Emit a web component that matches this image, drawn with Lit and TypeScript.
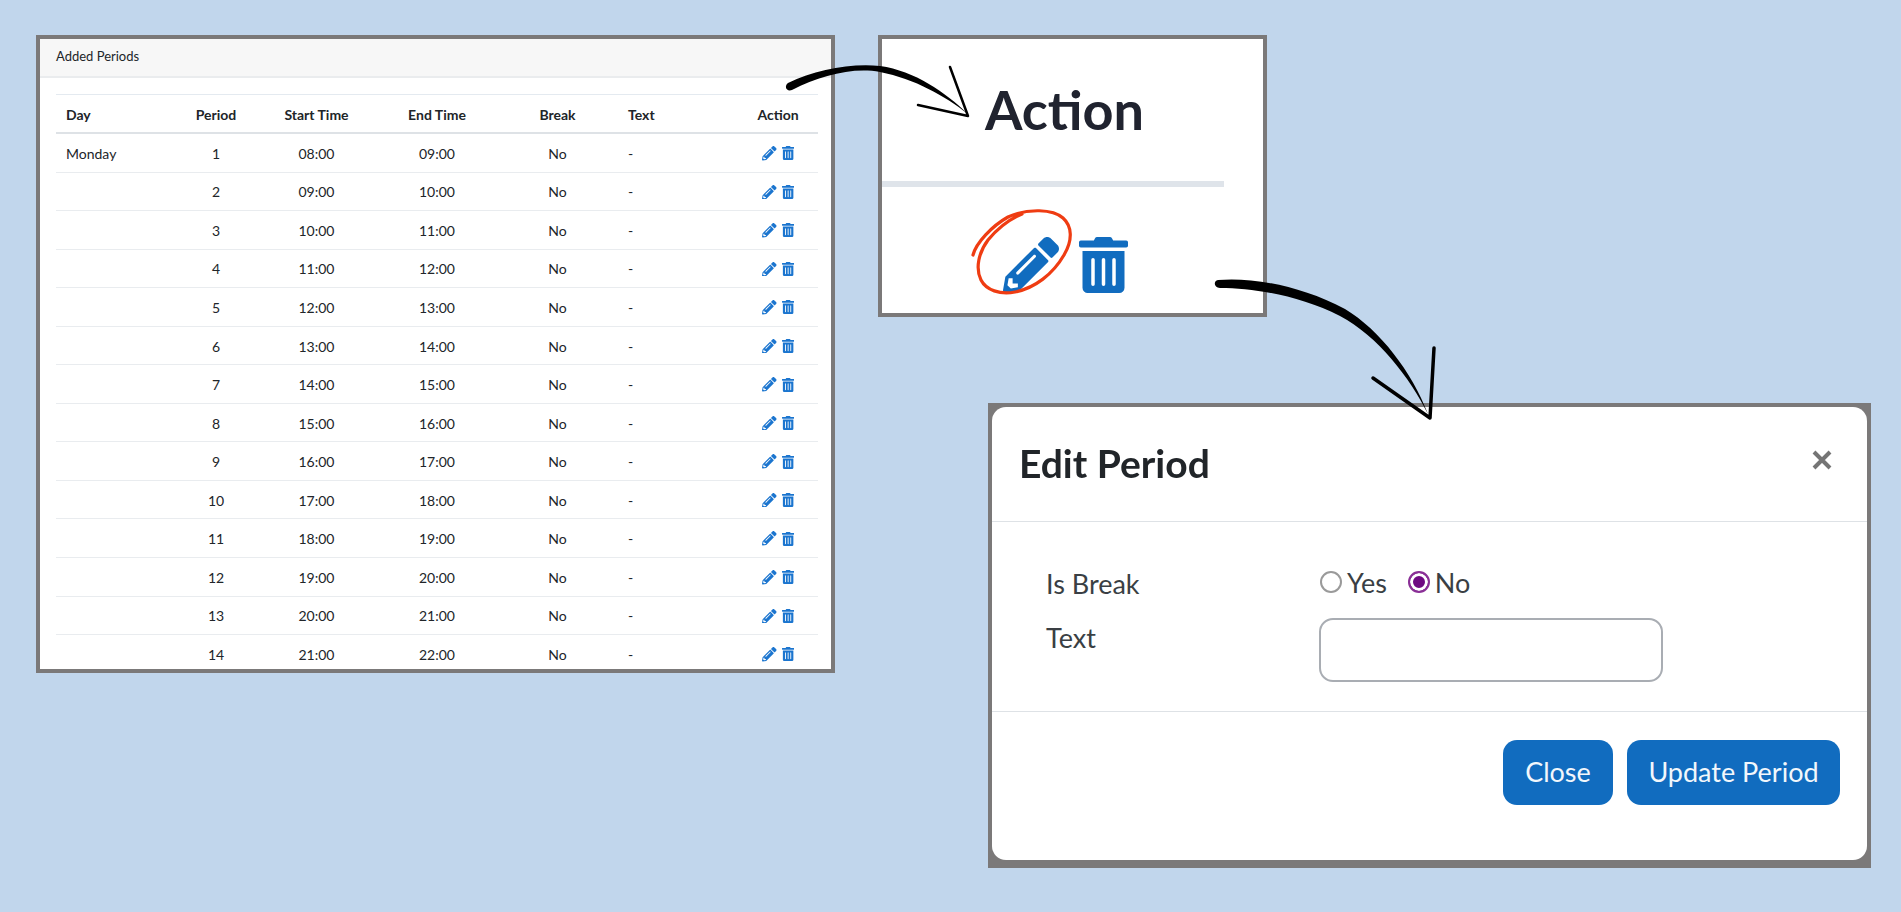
import { LitElement, html, css, svg } from "lit";
import { customElement } from "lit/decorators.js";

const pencil = svg`<path d="M497.9 142.1l-46.1 46.1c-4.7 4.7-12.3 4.7-17 0l-111-111c-4.7-4.7-4.7-12.3 0-17l46.1-46.1c18.7-18.7 49.1-18.7 67.9 0l60.1 60.1c18.8 18.7 18.8 49.1 0 67.9zM284.2 99.8L21.6 362.4.4 483.9c-2.9 16.4 11.4 30.6 27.8 27.8l121.5-21.3 262.6-262.6c4.3-4.3 4.3-11.3 0-15.6l-111-111c-4.4-4.3-11.4-4.3-15.7 0zM124.1 339.9c-5.5-5.5-5.5-14.3 0-19.8l154-154c5.5-5.5 14.3-5.5 19.8 0s5.5 14.3 0 19.8l-154 154c-5.5 5.5-14.3 5.5-19.8 0zM88 424h48v36.3l-64.5 11.3-31.1-31.1L51.7 376H88v48z"/>`;
const trash = svg`<path d="M32 464a48 48 0 0 0 48 48h288a48 48 0 0 0 48-48V128H32zm272-256a16 16 0 0 1 32 0v224a16 16 0 0 1-32 0zm-96 0a16 16 0 0 1 32 0v224a16 16 0 0 1-32 0zm-96 0a16 16 0 0 1 32 0v224a16 16 0 0 1-32 0zM432 32H312l-9.4-18.7A24 24 0 0 0 281.1 0H166.8a23.72 23.72 0 0 0-21.4 13.3L136 32H16A16 16 0 0 0 0 48v32a16 16 0 0 0 16 16h416a16 16 0 0 0 16-16V48a16 16 0 0 0-16-16z"/>`;

const rows = [
  ["Monday", "1", "08:00", "09:00"],
  ["", "2", "09:00", "10:00"],
  ["", "3", "10:00", "11:00"],
  ["", "4", "11:00", "12:00"],
  ["", "5", "12:00", "13:00"],
  ["", "6", "13:00", "14:00"],
  ["", "7", "14:00", "15:00"],
  ["", "8", "15:00", "16:00"],
  ["", "9", "16:00", "17:00"],
  ["", "10", "17:00", "18:00"],
  ["", "11", "18:00", "19:00"],
  ["", "12", "19:00", "20:00"],
  ["", "13", "20:00", "21:00"],
  ["", "14", "21:00", "22:00"],
];

@customElement("app-root")
export class AppRoot extends LitElement {
  static styles = css`
    :host {
      display: block;
      position: relative;
      height: 912px;
      overflow: hidden;
      background: #c1d6ec;
      font-family: Lato, "Open Sans", sans-serif;
      color: #212529;
    }
    .page {
      display: flex;
      gap: 43px;
      align-items: flex-start;
      padding: 35px 0 0 36px;
    }
    .frame {
      box-sizing: border-box;
      border: 4px solid #7b7979;
      background: #fff;
    }
    .periods {
      width: 799px;
      height: 638px;
      overflow: hidden;
      flex: none;
    }
    .periods-head {
      box-sizing: border-box;
      height: 39px;
      padding-left: 16px;
      line-height: 35px;
      font-size: 13px;
      background: #f7f7f7;
      border-bottom: 2px solid #eaecee;
    }
    .table-wrap {
      padding: 16px 13px 0 16px;
    }
    .row {
      display: grid;
      grid-template-columns: 100px 120px 81px 160px 81px 115px 1fr;
      height: 38.56px;
      box-sizing: border-box;
      align-items: center;
      font-size: 14px;
      border-bottom: 1.5px solid #e9ecef;
      padding-top: 1px;
    }
    .row.head {
      font-weight: 700;
      border-top: 1.5px solid #e4eaf0;
      border-bottom: 2px solid #dee2e6;
      height: 40px;
    }
    .row > span {
      text-align: center;
    }
    .row > .day {
      text-align: left;
      padding-left: 10px;
    }
    .row > .text {
      text-align: left;
      padding-left: 30px;
    }
    .row > .act {
      display: flex;
      justify-content: center;
      gap: 5px;
      padding-left: 25px;
      align-items: center;
    }
    .row .i-pen {
      width: 14.5px;
      height: 14.5px;
      fill: #1b75cf;
    }
    .row .i-bin {
      width: 12.25px;
      height: 14px;
      fill: #1b75cf;
    }
    .right {
      flex: none;
    }
    .zoomed {
      width: 389px;
      height: 282px;
      overflow: hidden;
    }
    .zoomed-title {
      height: 148px;
      width: 342px;
      box-sizing: border-box;
      padding: 37px 0 0 103px;
      font-size: 54px;
      font-weight: 700;
      line-height: 68px;
      color: #20232f;
      border-bottom: 6px solid #dfe4ea;
    }
    .zoomed-title span,
    .zoomed-icons {
      filter: blur(0.7px);
    }
    .zoomed-title span {
      display: inline-block;
    }
    .zoomed-icons {
      display: flex;
      padding: 50px 0 0 121px;
      gap: 20px;
      fill: #116cbf;
    }
    .zoomed-icons .i-pen {
      width: 56px;
      height: 56px;
    }
    .zoomed-icons .i-bin {
      width: 49px;
      height: 56px;
    }
    .dialog {
      width: 883px;
      height: 465px;
      box-sizing: border-box;
      margin: 86px 0 0 110px;
      background: #7b7979;
      padding: 4px 4px 8px;
    }
    .dialog-card {
      height: 100%;
      background: #fff;
      border-radius: 14px;
      display: flex;
      flex-direction: column;
    }
    .dialog-head {
      height: 115px;
      flex: none;
      box-sizing: border-box;
      border-bottom: 1.5px solid #dee2e6;
      display: flex;
      justify-content: space-between;
      padding: 19px 35px 0 27px;
    }
    .dialog-head h2 {
      margin: 0;
      font-size: 39px;
      font-weight: 700;
      line-height: 74px;
      color: #212529;
      filter: blur(0.5px);
    }
    .dialog-close {
      width: 20px;
      height: 20px;
      margin-top: 24px;
      stroke: #757575;
      stroke-width: 4;
      fill: none;
    }
    .dialog-body {
      flex: none;
      height: 190px;
      box-sizing: border-box;
      padding: 42px 0 0 54px;
      border-bottom: 1.5px solid #dee2e6;
      display: grid;
      grid-template-columns: 273px 344px;
      grid-template-rows: 40px 64px;
      row-gap: 14px;
      font-size: 27px;
      color: #3a3f44;
    }
    .field-label {
      line-height: 40px;
    }
    .radios {
      display: flex;
      align-items: center;
      height: 36px;
    }
    .radio {
      width: 22px;
      height: 22px;
      box-sizing: border-box;
      border-radius: 50%;
      border: 2px solid #9a9a9a;
      margin: 0 5px 0 1px;
    }
    .radio.on {
      border-color: #8a2f96;
      background: #6f0a82;
      box-shadow: inset 0 0 0 3px #fff;
      margin-left: 21px;
      margin-right: 5px;
    }
    .field-input {
      box-sizing: border-box;
      width: 344px;
      height: 64px;
      border: 2px solid #a9adb3;
      border-radius: 14px;
      background: #fff;
      padding: 0;
    }
    .dialog-foot {
      display: flex;
      justify-content: flex-end;
      gap: 14px;
      padding: 28px 27px 0 0;
    }
    .btn {
      height: 65px;
      box-sizing: border-box;
      border: none;
      border-radius: 14px;
      background: #116cbf;
      color: #f2f7fc;
      font: 400 27px Lato, sans-serif;
      padding: 0 0 2px;
    }
    .btn-close {
      width: 110px;
    }
    .btn-update {
      width: 213px;
    }
    .arrows {
      position: absolute;
      inset: 0;
      width: 1901px;
      height: 912px;
      pointer-events: none;
    }
  `;

  render() {
    return html`
      <div class="page">
        <section class="frame periods">
          <div class="periods-head">Added Periods</div>
          <div class="table-wrap">
            <div class="row head">
              <span class="day">Day</span><span>Period</span><span>Start Time</span><span>End Time</span
              ><span>Break</span><span class="text">Text</span><span class="act">Action</span>
            </div>
            ${rows.map(
              (r) => html`<div class="row">
                <span class="day">${r[0]}</span><span>${r[1]}</span><span>${r[2]}</span><span>${r[3]}</span
                ><span>No</span><span class="text">-</span>
                <span class="act">
                  <svg class="i-pen" viewBox="0 0 512 512">${pencil}</svg>
                  <svg class="i-bin" viewBox="0 0 448 512">${trash}</svg>
                </span>
              </div>`
            )}
          </div>
        </section>
        <div class="right">
          <section class="frame zoomed">
            <div class="zoomed-title"><span>Action</span></div>
            <div class="zoomed-icons">
              <svg class="i-pen" viewBox="0 0 512 512">${pencil}</svg>
              <svg class="i-bin" viewBox="0 0 448 512">${trash}</svg>
            </div>
          </section>
          <section class="dialog">
            <div class="dialog-card">
              <div class="dialog-head">
                <h2>Edit Period</h2>
                <svg class="dialog-close" viewBox="0 0 20 20"><path d="M2 2 18 18M18 2 2 18" /></svg>
              </div>
              <div class="dialog-body">
                <div class="field-label">Is Break</div>
                <div class="radios">
                  <span class="radio"></span>Yes <span class="radio on"></span>No
                </div>
                <div class="field-label">Text</div>
                <input class="field-input" />
              </div>
              <div class="dialog-foot">
                <button class="btn btn-close">Close</button>
                <button class="btn btn-update">Update Period</button>
              </div>
            </div>
          </section>
        </div>
      </div>
      <svg class="arrows" viewBox="0 0 1901 912">
        <path d="M788 83C815 70 850 63 880 66C915 71 945 92 968 114C945 96 915 79 880 72C852 67 820 76 792 90C786 92 784 86 788 83Z" fill="#000" />
        <path d="M950 67 968 116 918 105" fill="none" stroke="#000" stroke-width="2.5" stroke-linecap="round" stroke-linejoin="round" />
        <path d="M1218 280C1250 277 1300 285 1345 309C1380 330 1412 372 1428 414C1410 378 1378 336 1340 316C1300 296 1255 288 1220 288C1214 288 1213 281 1218 280Z" fill="#000" />
        <path d="M1434 348 1430 418 1373 378" fill="none" stroke="#000" stroke-width="3.5" stroke-linecap="round" stroke-linejoin="round" />
        <path d="M973 255C976 243 992 226 1008 217C1028 208 1053 209 1063 218C1072 226 1073 240 1064 255C1053 274 1035 288 1015 292C1000 295 986 290 981 280C975 268 979 252 988 240C998 228 1010 219 1022 214" fill="none" stroke="#ef3c12" stroke-width="3.2" stroke-linecap="round" />
      </svg>
    `;
  }
}
